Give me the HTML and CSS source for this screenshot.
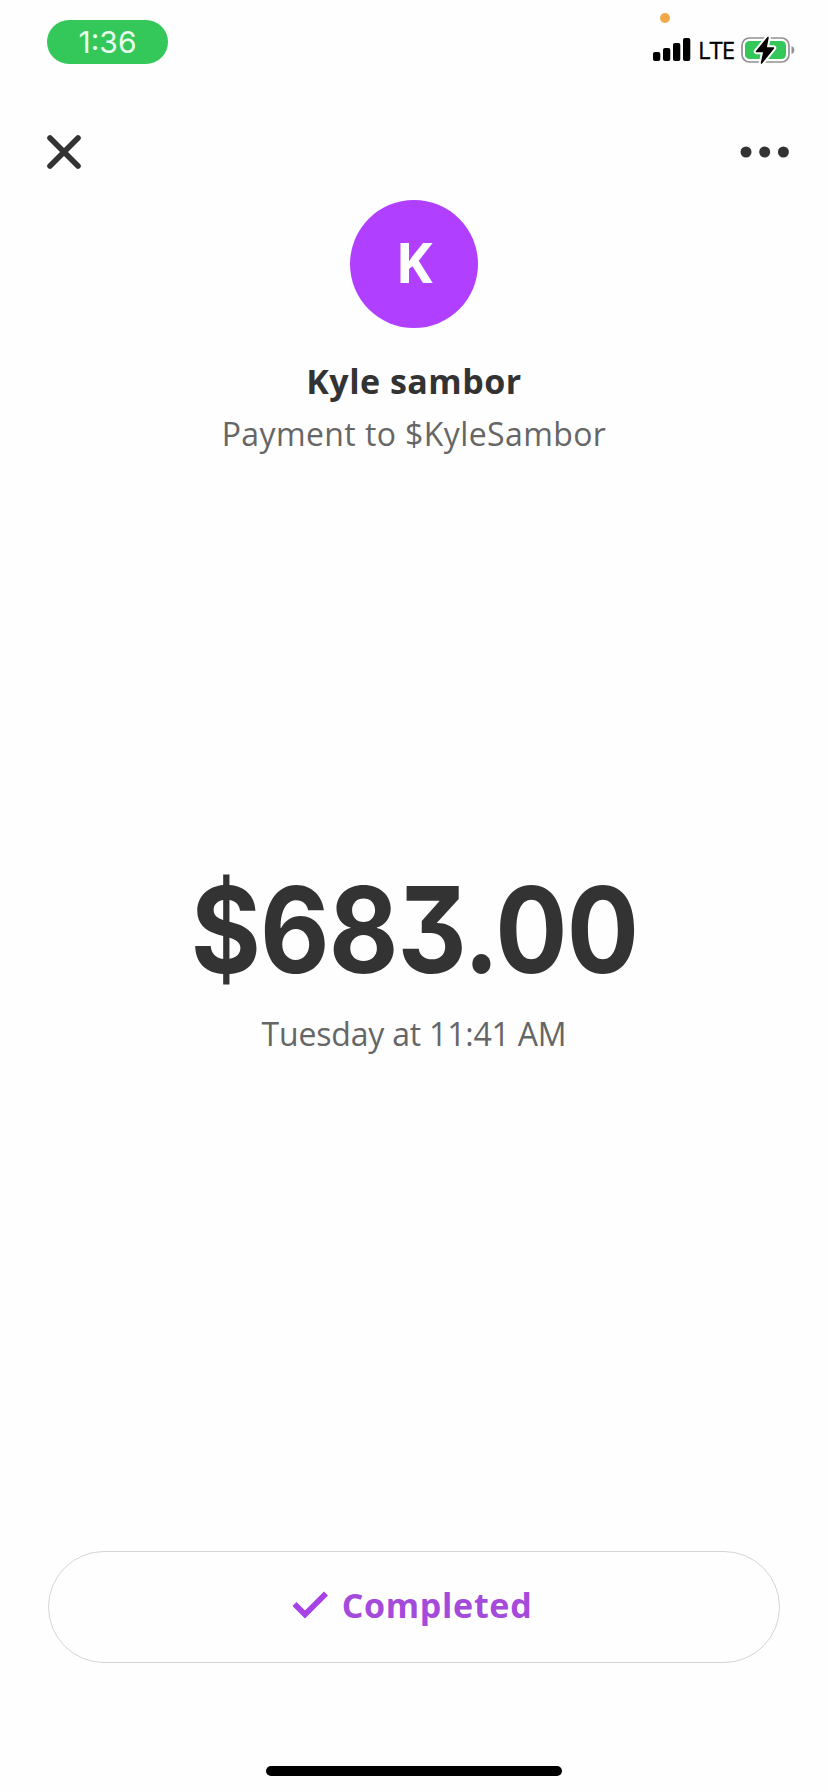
FILE: index.html
```html
<!DOCTYPE html>
<html lang="en">
<head>
<meta charset="utf-8">
<title>Payment</title>
<link rel="stylesheet" href="styles.css">
</head>
<body>
<main class="screen">
  <header class="status">
    <div class="time">1:36</div>
    <div class="indicators">
      <span class="mic-dot"></span>
      <svg class="signal" width="38" height="24" viewBox="0 0 38 24"><rect x="0" y="14" width="7.3" height="9" rx="2"/><rect x="10" y="10" width="7.3" height="13" rx="2"/><rect x="20" y="5" width="7.3" height="18" rx="2"/><rect x="30" y="0" width="7.3" height="23" rx="2"/></svg>
      <span class="network">LTE</span>
      <svg class="battery" width="54" height="28" viewBox="0 0 54 28">
        <rect x="1" y="2" width="47" height="24" rx="7.5" fill="#fff" stroke="#929292" stroke-width="1.7"/>
        <rect x="4" y="5" width="41" height="18" rx="4.5" fill="#34c759"/>
        <path d="M50.5 10v8q2.8-1 2.800-4t-2.800-4z" fill="#929292"/>
        <path d="M27 1.500 15.500 15.500h7.500l-2.500 11.500L32.500 12h-7.500z" fill="#000" stroke="#fff" stroke-width="5.500" stroke-linejoin="round"/>
        <path d="M27 1.500 15.500 15.500h7.500l-2.500 11.500L32.500 12h-7.500z" stroke="#000" stroke-width="1.500" stroke-linejoin="round"/>
      </svg>
    </div>
  </header>
  <nav class="toolbar">
    <svg width="34" height="34" viewBox="0 0 34 34"><path d="M3 3 31 31M31 3 3 31" stroke="#333" stroke-width="5.6" stroke-linecap="round"/></svg>
    <svg width="50" height="12" viewBox="0 0 50 12" fill="#333"><circle cx="6" cy="6" r="5.500"/><circle cx="24.700" cy="6" r="5.500"/><circle cx="43.400" cy="6" r="5.500"/></svg>
  </nav>
  <section class="recipient">
    <div class="avatar">K</div>
    <h1 class="name">Kyle sambor</h1>
    <p class="detail">Payment to $KyleSambor</p>
  </section>
  <section class="payment">
    <div class="amount">$683.00</div>
    <p class="date">Tuesday at 11:41 AM</p>
  </section>
  <div class="completed">
    <svg width="36" height="28" viewBox="0 0 36 28"><path d="M2.500 13 13 23.500 34 2.500" fill="none" stroke="#a642e6" stroke-width="5.800"/></svg>
    <span>Completed</span>
  </div>
  <div class="home"></div>
</main>
</body>
</html>
```
FILE: styles.css
```css
* { box-sizing: border-box; }
body { margin: 0; background: #fefefe; }
h1, p { margin: 0; }
.screen { width: 828px; height: 1792px; display: flex; flex-direction: column; align-items: center; font-family: "Open Sans", "Noto Sans", sans-serif; color: #333; overflow: hidden; white-space: nowrap; }
.status { width: 100%; height: 64px; padding: 20px 33px 0 47px; display: flex; justify-content: space-between; align-items: flex-start; }
.time { width: 121px; height: 44px; border-radius: 22px; background: #34c759; color: #e9fff0; font: 400 30px/45px Inter, sans-serif; text-align: center; }
.indicators { position: relative; display: flex; padding-top: 15px; }
.mic-dot { position: absolute; left: 7px; top: -7px; width: 10px; height: 10px; border-radius: 50%; background: #efa947; }
.signal { margin-top: 3px; margin-right: 7px; }
.network { width: 43px; color: #000; font: 400 24px/30px "Open Sans", sans-serif; letter-spacing: -1px; -webkit-text-stroke: .3px #000; }
.battery { margin-top: 1px; }
.toolbar { width: 100%; height: 34px; margin-top: 71px; padding: 0 38px 0 47px; display: flex; justify-content: space-between; align-items: center; }
.recipient { margin-top: 31px; display: flex; flex-direction: column; align-items: center; }
.avatar { width: 128px; height: 128px; border-radius: 50%; background: #b13fff; color: #fff; text-align: center; font-size: 56px; line-height: 123px; font-weight: 700; }
.name { margin-top: 28px; font-size: 34px; line-height: 50px; font-weight: 700; letter-spacing: .5px; }
.detail { margin-top: 4px; font-size: 32px; line-height: 48px; color: #666; letter-spacing: .4px; }
.payment { margin-top: 402px; display: flex; flex-direction: column; align-items: center; }
.amount { font: 650 119px/140px Inter, sans-serif; font-feature-settings: "cv09"; letter-spacing: -1px; transform: scaleX(.9); }
.date { margin-top: 10px; font-size: 32px; line-height: 48px; color: #666; letter-spacing: -.2px; }
.completed { width: 732px; height: 112px; margin-top: 493px; border: 1px solid #d5d5d5; border-radius: 56px; display: flex; justify-content: center; align-items: center; gap: 14px; padding: 0 4px 4px 0; color: #a44bdb; font-size: 34px; line-height: 50px; font-weight: 700; letter-spacing: .7px; }
.home { width: 296px; height: 10px; margin-top: 103px; border-radius: 5px; background: #000; }
```
